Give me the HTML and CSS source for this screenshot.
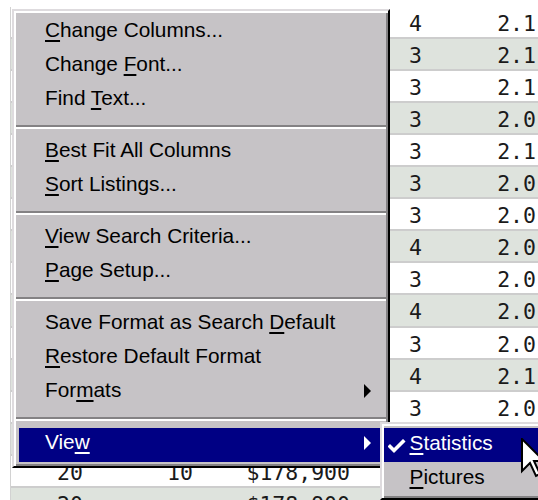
FILE: index.html
```html
<!DOCTYPE html>
<html lang="en">
<head>
<meta charset="utf-8">
<title>Listings</title>
<link rel="stylesheet" href="styles.css">
</head>
<body>
<div class="sheet">
  <div class="row"><span></span><span></span><span></span><span>4</span><span>2.1</span></div>
  <div class="row"><span></span><span></span><span></span><span>3</span><span>2.1</span></div>
  <div class="row"><span></span><span></span><span></span><span>3</span><span>2.1</span></div>
  <div class="row"><span></span><span></span><span></span><span>3</span><span>2.0</span></div>
  <div class="row"><span></span><span></span><span></span><span>3</span><span>2.1</span></div>
  <div class="row"><span></span><span></span><span></span><span>3</span><span>2.0</span></div>
  <div class="row"><span></span><span></span><span></span><span>3</span><span>2.0</span></div>
  <div class="row"><span></span><span></span><span></span><span>4</span><span>2.0</span></div>
  <div class="row"><span></span><span></span><span></span><span>3</span><span>2.0</span></div>
  <div class="row"><span></span><span></span><span></span><span>4</span><span>2.0</span></div>
  <div class="row"><span></span><span></span><span></span><span>3</span><span>2.0</span></div>
  <div class="row"><span></span><span></span><span></span><span>4</span><span>2.1</span></div>
  <div class="row"><span></span><span></span><span></span><span>3</span><span>2.0</span></div>
  <div class="row"><span></span><span></span><span></span><span></span><span></span></div>
  <div class="row"><span>20</span><span>10</span><span>$178,900</span><span></span><span></span></div>
  <div class="row"><span>20</span><span></span><span>$178,900</span><span></span><span></span></div>
</div>

<div class="menu">
  <div class="item"><span class="label"><u>C</u>hange Columns...</span></div>
  <div class="item"><span class="label">Change <u>F</u>ont...</span></div>
  <div class="item"><span class="label">Find <u>T</u>ext...</span></div>
  <div class="sep"></div>
  <div class="item"><span class="label"><u>B</u>est Fit All Columns</span></div>
  <div class="item"><span class="label"><u>S</u>ort Listings...</span></div>
  <div class="sep"></div>
  <div class="item"><span class="label"><u>V</u>iew Search Criteria...</span></div>
  <div class="item"><span class="label"><u>P</u>age Setup...</span></div>
  <div class="sep"></div>
  <div class="item"><span class="label">Save Format as Search <u>D</u>efault</span></div>
  <div class="item"><span class="label"><u>R</u>estore Default Format</span></div>
  <div class="item"><span class="label">For<u>m</u>ats</span><span class="arrow"></span></div>
  <div class="sep"></div>
  <div class="item active"><span class="label">Vie<u>w</u></span><span class="arrow"></span></div>
</div>

<div class="menu submenu">
  <div class="item active">
    <svg class="check" width="18" height="16" viewBox="0 0 18 16"><path d="M2 7.5 L6 11.5 L15 2.5" fill="none" stroke="#fff" stroke-width="3.6" stroke-linecap="square"/></svg>
    <span class="label"><u>S</u>tatistics</span>
  </div>
  <div class="item"><span class="label"><u>P</u>ictures</span></div>
</div>

<svg class="cursor" width="26" height="40" viewBox="0 0 13 20">
  <path d="M0.5 0.5 L0.5 16.5 L4.5 12.5 L7.5 19 L9.5 18 L6.5 11.5 L11.5 11.5 Z" fill="#fff" stroke="#000" stroke-width="1" stroke-linejoin="miter"/>
</svg>
</body>
</html>
```
FILE: styles.css
```css
html, body {
  margin: 0;
  padding: 0;
  width: 538px;
  height: 500px;
  overflow: hidden;
  background: #fff;
}

/* listing grid underneath the popup */
.sheet {
  margin: 6.6px 0 0 10px;
  border-left: 1px solid #d2d2d2;
  font-family: "DejaVu Sans Mono", monospace;
  font-size: 21.5px;
  color: #1a1a1a;
}

.row {
  display: grid;
  grid-template-columns: 72px 110px 157px 72px 114px;
  box-sizing: border-box;
  height: 32.1px;
  padding-top: 4px;
  line-height: 26.1px;
  border-bottom: 2px solid #cdcdcd;
  background: #fff;
}

.row:nth-child(even) {
  background: #dee3dd;
}

.row span {
  text-align: right;
  white-space: nowrap;
}

/* popup menu */
.menu {
  position: absolute;
  left: 12px;
  top: 9px;
  width: 378px;
  height: 459px;
  box-sizing: border-box;
  padding: 4.3px 5px 2px;
  background: #c6c3c6;
  border: 2px solid;
  border-color: #dedbde #000 #000 #dedbde;
  box-shadow: inset 2px 2px 0 #fff, inset -2px -2px 0 #848284;
  font-family: "Liberation Sans", Arial, sans-serif;
  font-size: 20.8px;
  color: #000;
}

.item {
  display: flex;
  align-items: flex-start;
  height: 34.2px;
  box-sizing: border-box;
  padding: 2.3px 0 0 26px;
  line-height: 23px;
  white-space: nowrap;
  position: relative;
}

.item u {
  text-decoration: underline;
  text-decoration-thickness: 2px;
  text-underline-offset: 3px;
}

.item.active {
  background: #000084;
  color: #fff;
}

.arrow {
  margin-left: auto;
  margin-right: 12.5px;
  margin-top: 6px;
  width: 0;
  height: 0;
  border-top: 7px solid transparent;
  border-bottom: 7px solid transparent;
  border-left: 7.5px solid #000;
}

.item.active .arrow {
  border-left-color: #fff;
}

.sep {
  height: 17.6px;
  box-sizing: border-box;
  padding-top: 6.8px;
  margin: 0 -3px;
}

.sep::before {
  content: "";
  display: block;
  height: 2px;
  background: #848284;
  border-bottom: 2px solid #fff;
}

/* cascading submenu */
.submenu {
  left: 380px;
  top: 422px;
  width: 180px;
  height: 78px;
  padding: 4.3px 0 2px 2px;
}

.submenu .item {
  padding-left: 25.5px;
}

.check {
  position: absolute;
  left: 3.5px;
  top: 11px;
}

.cursor {
  position: absolute;
  left: 521px;
  top: 438px;
}
```
